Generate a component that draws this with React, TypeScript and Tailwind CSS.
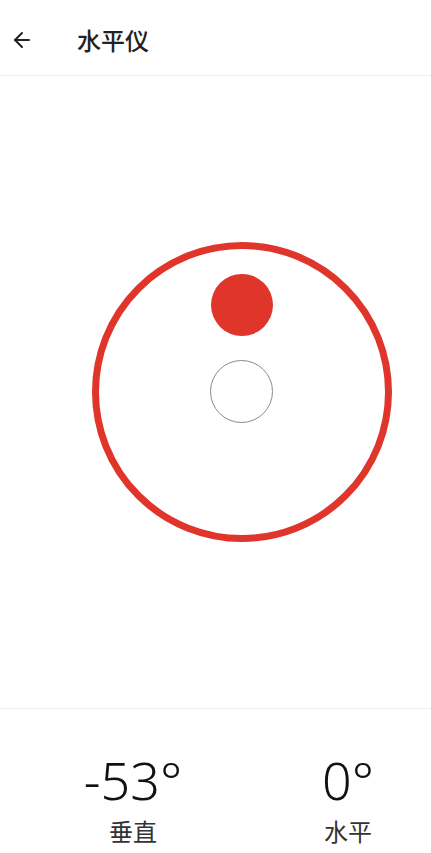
import React from 'react'
import { ArrowLeft } from 'lucide-react'

const font = { fontFamily: '"Noto Sans", "Noto Sans CJK SC", sans-serif' }

function Reading({ value, label }: { value: string; label: string }) {
  return (
    <div className="flex w-[120px] flex-col items-center">
      <div className="text-[52px] font-light leading-none text-[#111]">{value}</div>
      <div className="mt-[14px] text-[24px] leading-none text-[#333]">{label}</div>
    </div>
  )
}

export default function App() {
  return (
    <div className="flex h-screen w-full flex-col bg-white" style={font}>
      {/* Header */}
      <div className="flex h-[76px] shrink-0 items-center border-b border-[#efefef]">
        <button className="ml-[10px] mt-[5px] p-0 text-[#222]">
          <ArrowLeft className="h-[24px] w-[24px]" strokeWidth={2} />
        </button>
        <h1 className="ml-[43px] mt-[6px] text-[24px] font-medium text-[#222]">水平仪</h1>
      </div>

      {/* Level */}
      <div className="flex flex-1 items-center justify-center">
        <div className="ml-[52px] flex h-[300px] w-[300px] flex-col items-center rounded-full border-[7px] border-[#e0352b]">
          <div className="mt-[25px] h-[62px] w-[62px] rounded-full bg-[#e0352b]" />
          <div className="mt-[24px] h-[63px] w-[63px] rounded-full border border-[#8a8a8a]" />
        </div>
      </div>

      {/* Readings */}
      <div className="flex h-[145px] shrink-0 border-t border-[#efefef] pl-[73px] pt-[45px]">
        <Reading value="-53°" label="垂直" />
        <div className="ml-[95px]">
          <Reading value="0°" label="水平" />
        </div>
      </div>
    </div>
  )
}
